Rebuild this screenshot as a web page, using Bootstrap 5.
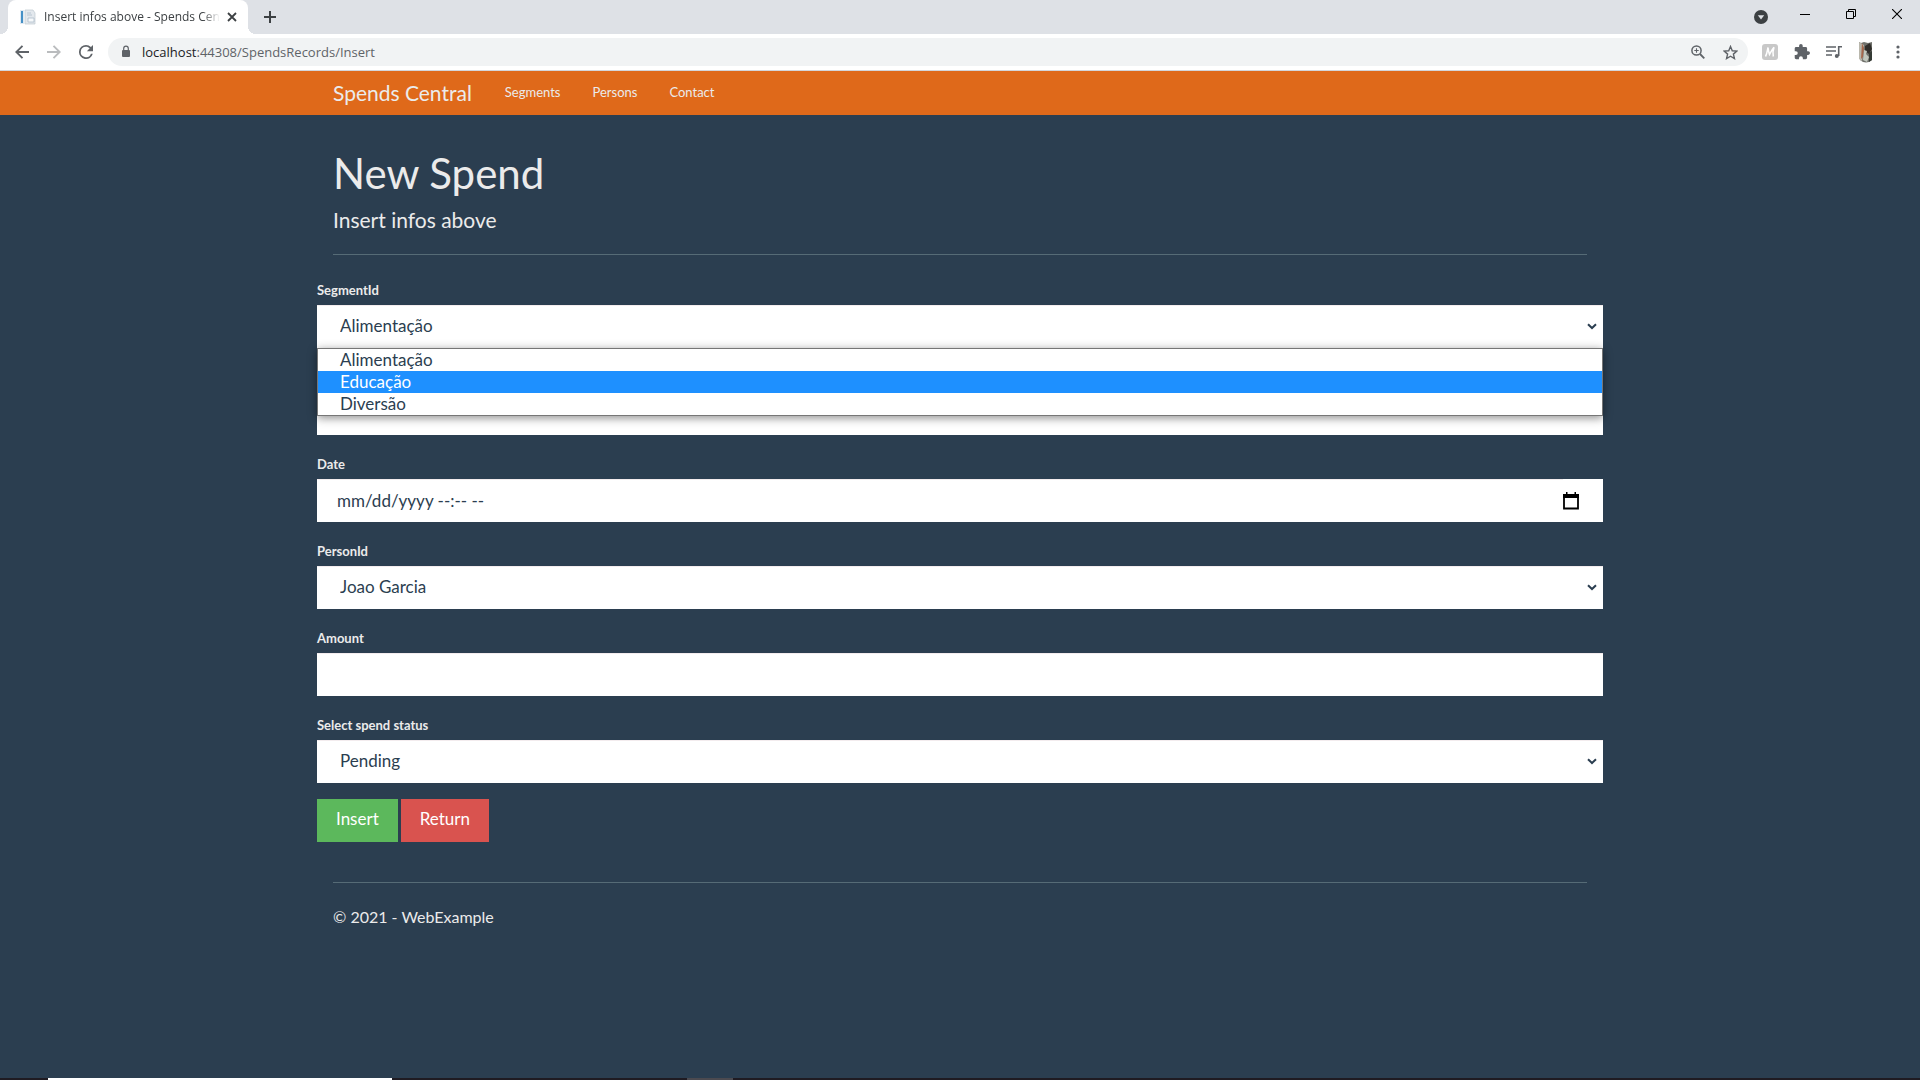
<!DOCTYPE html>
<html lang="en">
<head>
<meta charset="utf-8">
<meta name="viewport" content="width=device-width, initial-scale=1">
<title>Insert infos above - Spends Central</title>
<link href="https://cdn.jsdelivr.net/npm/bootstrap@5.3.0/dist/css/bootstrap.min.css" rel="stylesheet">
<style>
body{font-family:Lato,sans-serif;font-size:17px;line-height:24px;background:#2b3e50;color:#ebebeb}
.browser-ui{font-family:"Open Sans","Noto Sans",sans-serif;background:#dee1e6;color:#3c4043}
.browser-ui button{border:0;background:none;padding:0;display:flex;align-items:center;justify-content:center;color:#5f6368}
.browser-ui svg{display:block}
.tab-strip{height:34px;padding-left:8px}
.page-tab{position:relative;width:240px;background:#fff;border-radius:8px 8px 0 0;padding:0 10px 0 12px;font-size:12px;line-height:34px}
.page-tab::before,.page-tab::after{content:"";position:absolute;bottom:0;width:8px;height:8px}
.page-tab::before{left:-8px;background:radial-gradient(circle at 0 0,transparent 8px,#fff 8px)}
.page-tab::after{right:-8px;background:radial-gradient(circle at 100% 0,transparent 8px,#fff 8px)}
.page-title{width:176px;overflow:hidden;white-space:nowrap;-webkit-mask-image:linear-gradient(90deg,#000 90%,transparent);mask-image:linear-gradient(90deg,#000 90%,transparent)}
.browser-ui .win-btn{width:46px;height:28px;color:#000}
.browser-ui .tab-search{height:34px;margin-right:-2px}
.toolbar{height:37px;background:#fff;border-bottom:1px solid #d4d6da;padding:0 6px}
.tool-btn{width:32px;height:28px}
.url-box{height:28px;border-radius:14px;background:#f1f3f4;padding:0 2px 0 12px;margin:0 6px;font-size:13px;color:#5f6368}
.url-box .host{color:#202124}
.url-box a{color:inherit;text-decoration:none;margin-left:10px}
.app-nav{background:#df691a;--bs-navbar-padding-y:0}
.page-width{max-width:1286px;padding:0 16px}
.app-nav .navbar-brand{font-size:21px;line-height:44px;padding:0;margin:0 17px 0 0;color:#ebebeb}
.app-nav .navbar-nav .nav-link{font-size:13px;line-height:42px;padding:0 16px 2px;color:#ebebeb}
h1{font-size:42px;line-height:48px;font-weight:400;margin:0 0 11px}
h4{font-size:21px;line-height:24px;font-weight:400;margin:0}
hr{margin:0;color:#566b76;opacity:1}
.intro{padding-top:34px}
.intro hr{margin:22px 0}
.spend-form{margin:0 -16px}
.field{margin-bottom:16px}
.field label{display:block;font-size:13px;line-height:26px;font-weight:700;margin-bottom:2px}
.field .form-control,.field .form-select{height:43px;border:0;border-radius:0;background-color:#fff;color:#2b3e50;font-size:17px;line-height:24px;padding:9px 20px 10px;box-shadow:inset 0 2px 0 -1px #f3ecee}
.field .form-select{padding-left:23px;background-image:url("data:image/svg+xml,%3Csvg xmlns='http://www.w3.org/2000/svg' viewBox='0 0 10 7'%3E%3Cpath d='M1 1.2l4 3.8 4-3.8' fill='none' stroke='%232b3e50' stroke-width='2'/%3E%3C/svg%3E");background-size:10px 7px;background-position:right 6px center}
.field .form-control::placeholder{color:#2b3e50;opacity:1}
.date-group{background:#fff}
.date-btn{border:0;background:none;padding:0 24px 0 0;display:flex;align-items:center}
.option-list{position:absolute;top:100%;left:0;right:0;z-index:5;border:1px solid #767676;background:#fff;color:#2b3e50;box-shadow:0 2px 9px rgba(0,0,0,.45);font-size:17px;line-height:22px;list-style:none;margin:0;padding:0}
.option-list li{padding-left:22px}
.option-list .chosen{background:#1e90ff;color:#fff}
.form-actions{gap:3px}
.form-btn{height:43px;border:0;border-radius:0;font-size:17px;line-height:24px;padding:8px 19px 11px;color:#fff}
.go{background:#5cb85c}.back{background:#d9534f}
footer{margin-top:40px}
footer p{margin:22px 0 0;font-size:16px}
.taskbar{height:2px;background:#1f1b22}
.taskbar .lead-gap{flex:0 0 2.5%}.taskbar .open-app{flex:0 0 17.9%;background:#fff}.taskbar .idle{flex:0 0 15.4%}.taskbar .other-app{flex:0 0 2.4%;background:#4b4a50}
</style>
</head>
<body class="d-flex flex-column min-vh-100">
<header class="browser-ui">
  <div class="tab-strip d-flex">
    <div class="page-tab d-flex align-items-center">
      <svg width="16" height="16" viewBox="0 0 16 16"><path d="M0 1h4v14H0z" fill="#dfe9f2"/><path d="M1 2h2v12H1z" fill="#4590c6"/><path d="M5 1h8l2 3v11H5z" fill="#e3e8ed" stroke="#bfc8d0" stroke-width=".7"/><path d="M7 4h4M7 6h5M8 9h6v4H8z" fill="#f6f8fa" stroke="#aebdca" stroke-width=".8"/></svg>
      <span class="page-title ms-2">Insert infos above - Spends Central</span>
      <button class="ms-auto" aria-label="Close tab"><svg width="12" height="12" viewBox="0 0 12 12"><path d="M2 2l8 8M10 2l-8 8" stroke="#3c4043" stroke-width="1.8"/></svg></button>
    </div>
    <button class="ms-3" aria-label="New tab"><svg width="12" height="12" viewBox="0 0 12 12"><path d="M6 0v12M0 6h12" stroke="#3c4043" stroke-width="2"/></svg></button>
    <div class="d-flex ms-auto">
      <button class="win-btn tab-search" aria-label="Search tabs"><svg width="14" height="14" viewBox="0 0 14 14"><circle cx="7" cy="7" r="7" fill="#3c4043"/><path d="M3.800 5.200h6.400L7 9.600z" fill="#dee1e6"/></svg></button>
      <button class="win-btn" aria-label="Minimize"><svg width="10" height="10" viewBox="0 0 10 10"><path d="M0 5.500h10" stroke="#000"/></svg></button>
      <button class="win-btn" aria-label="Restore"><svg width="10" height="10" viewBox="0 0 10 10" fill="none" stroke="#000"><path d="M.5 2.500h7v7h-7zM2.500 2.500v-2h7v7h-2"/></svg></button>
      <button class="win-btn" aria-label="Close"><svg width="10" height="10" viewBox="0 0 10 10"><path d="M0 0l10 10M10 0L0 10" stroke="#000" stroke-width="1.100"/></svg></button>
    </div>
  </div>
  <div class="toolbar d-flex align-items-center">
    <button class="tool-btn" aria-label="Back"><svg width="14" height="14" viewBox="0 0 14 14" fill="none" stroke="#5f6368" stroke-width="1.900"><path d="M14 7H1.500M7.500 .8L1.300 7l6.200 6.200"/></svg></button>
    <button class="tool-btn" aria-label="Forward"><svg width="14" height="14" viewBox="0 0 14 14" fill="none" stroke="#babcbe" stroke-width="1.900"><path d="M0 7h12.500M6.500 .8L12.700 7l-6.200 6.200"/></svg></button>
    <button class="tool-btn" aria-label="Reload"><svg width="14" height="14" viewBox="4 4 16 16" fill="#5f6368"><path d="M17.650 6.350A7.960 7.960 0 0 0 12 4a8 8 0 1 0 7.730 10h-2.080A6 6 0 1 1 12 6c1.660 0 3.140.69 4.220 1.780L13 11h7V4z"/></svg></button>
    <div class="url-box d-flex align-items-center flex-grow-1">
      <svg width="12" height="14" viewBox="0 0 12 14"><path d="M3 5h6a1 1 0 0 1 1 1v5a1 1 0 0 1-1 1H3a1 1 0 0 1-1-1V6a1 1 0 0 1 1-1z" fill="#5f6368"/><path d="M3.700 5V3.500a2.300 2.300 0 0 1 4.600 0V5" fill="none" stroke="#5f6368" stroke-width="1.200"/></svg>
      <a href="#"><span class="host">localhost</span>:44308/SpendsRecords/Insert</a>
      <div class="d-flex ms-auto">
        <button class="tool-btn" aria-label="Zoom"><svg width="14" height="14" viewBox="0 0 14 14" fill="none" stroke="#5f6368"><circle cx="5.500" cy="5.500" r="4.600" stroke-width="1.500"/><path d="M9 9l4.300 4.300" stroke-width="1.800"/><path d="M5.500 3.300v4.400M3.300 5.500h4.400" stroke-width="1.100"/></svg></button>
        <button class="tool-btn" aria-label="Bookmark"><svg width="15" height="15" viewBox="0 0 16 16" fill="none" stroke="#5f6368" stroke-width="1.500"><path d="M8 1.600l1.900 4.500 4.900.4-3.700 3.200 1.100 4.800L8 12l-4.200 2.500 1.100-4.800L1.200 6.500l4.900-.4z"/></svg></button>
      </div>
    </div>
    <button class="tool-btn" aria-label="Extension"><svg width="16" height="16" viewBox="0 0 16 16"><rect width="16" height="16" rx="3" fill="#c8c8c8"/><path d="M3.500 12.500C5 10 5.500 6 6 3.500c.4 3 .8 5 1.500 7C9 8 10 5.500 12 3.200c-1 3-1.400 6.500-.7 9.300" fill="none" stroke="#fff" stroke-width="1.500"/></svg></button>
    <button class="tool-btn" aria-label="Extensions"><svg width="16" height="16" viewBox="1 1 22 22" fill="#5f6368"><path d="M20.500 11H19V7a2 2 0 0 0-2-2h-4V3.500a2.500 2.500 0 0 0-5 0V5H4a2 2 0 0 0-2 2v3.800h1.500a2.700 2.700 0 0 1 0 5.400H2V20c0 1.100.9 2 2 2h3.800v-1.500a2.700 2.700 0 0 1 5.400 0V22H17a2 2 0 0 0 2-2v-4h1.500a2.500 2.500 0 0 0 0-5z"/></svg></button>
    <button class="tool-btn" aria-label="Media"><svg width="17" height="14" viewBox="0 0 17 14" fill="none" stroke="#5f6368" stroke-width="1.600"><path d="M0 2h10M0 6h10M0 10h6M12.700 11V1.800H16"/><circle cx="10.800" cy="11" r="2" fill="#5f6368" stroke="none"/></svg></button>
    <button class="tool-btn" aria-label="Profile"><svg width="14" height="22" viewBox="0 0 14 22"><path d="M0 1l2 1 3-1 4 1 4-1v18q-6 5-12 0z" fill="#6f706b"/><path d="M0 1l5 3-2 16-3-2z" fill="#b9b7ac"/><path d="M3 2l2 5-1 9-2 2z" fill="#a4674c"/><path d="M6 5l5-3 2 6-3 5-4-3z" fill="#302e2b"/><path d="M5 9l3 1-1 3 3 3-2 5-4-2z" fill="#c1c7bd"/><path d="M10 12l3-2v9l-3 2z" fill="#353b35"/></svg></button>
    <button class="tool-btn" aria-label="Menu"><svg width="4" height="14" viewBox="0 0 4 14" fill="#5f6368"><circle cx="2" cy="2" r="1.600"/><circle cx="2" cy="7" r="1.600"/><circle cx="2" cy="12" r="1.600"/></svg></button>
  </div>
</header>

<nav class="navbar navbar-expand app-nav">
  <div class="container-fluid page-width">
    <a class="navbar-brand" href="#">Spends Central</a>
    <ul class="navbar-nav me-auto">
      <li class="nav-item"><a class="nav-link" href="#">Segments</a></li>
      <li class="nav-item"><a class="nav-link" href="#">Persons</a></li>
      <li class="nav-item"><a class="nav-link" href="#">Contact</a></li>
    </ul>
  </div>
</nav>

<main class="container-fluid page-width">
  <div class="intro">
    <h1>New Spend</h1>
    <h4>Insert infos above</h4>
    <hr>
  </div>
  <form class="spend-form">
    <div class="field">
      <label for="segment">SegmentId</label>
      <div class="position-relative">
        <select class="form-select" id="segment"><option>Alimentação</option><option>Educação</option><option>Diversão</option></select>
        <ul class="option-list" role="listbox" aria-label="SegmentId">
          <li role="option">Alimentação</li>
          <li role="option" class="chosen" aria-selected="true">Educação</li>
          <li role="option">Diversão</li>
        </ul>
      </div>
    </div>
    <div class="field">
      <label for="name">&nbsp;</label>
      <input class="form-control" id="name" type="text" aria-label="Name">
    </div>
    <div class="field">
      <label for="date">Date</label>
      <div class="date-group d-flex">
        <input class="form-control" id="date" type="text" placeholder="mm/dd/yyyy --:-- --">
        <button type="button" class="date-btn" aria-label="Pick a date"><svg width="16" height="18" viewBox="0 0 16 18"><path d="M1 3h14v13.500H1z" fill="none" stroke="#000" stroke-width="1.800"/><path d="M0 2h16v4H0zM3 0h1.500v3H3zM11.500 0H13v3h-1.500z"/></svg></button>
      </div>
    </div>
    <div class="field">
      <label for="person">PersonId</label>
      <select class="form-select" id="person"><option>Joao Garcia</option></select>
    </div>
    <div class="field">
      <label for="amount">Amount</label>
      <input class="form-control" id="amount" type="text">
    </div>
    <div class="field">
      <label for="status">Select spend status</label>
      <select class="form-select" id="status"><option>Pending</option></select>
    </div>
    <div class="d-flex form-actions">
      <button type="submit" class="btn form-btn go">Insert</button>
      <a href="#" class="btn form-btn back">Return</a>
    </div>
  </form>
  <footer>
    <hr>
    <p>© 2021 - WebExample</p>
  </footer>
</main>
<div class="taskbar d-flex mt-auto"><div class="lead-gap"></div><div class="open-app"></div><div class="idle"></div><div class="other-app"></div></div>
<script src="https://cdn.jsdelivr.net/npm/bootstrap@5.3.0/dist/js/bootstrap.bundle.min.js"></script>
</body>
</html>
